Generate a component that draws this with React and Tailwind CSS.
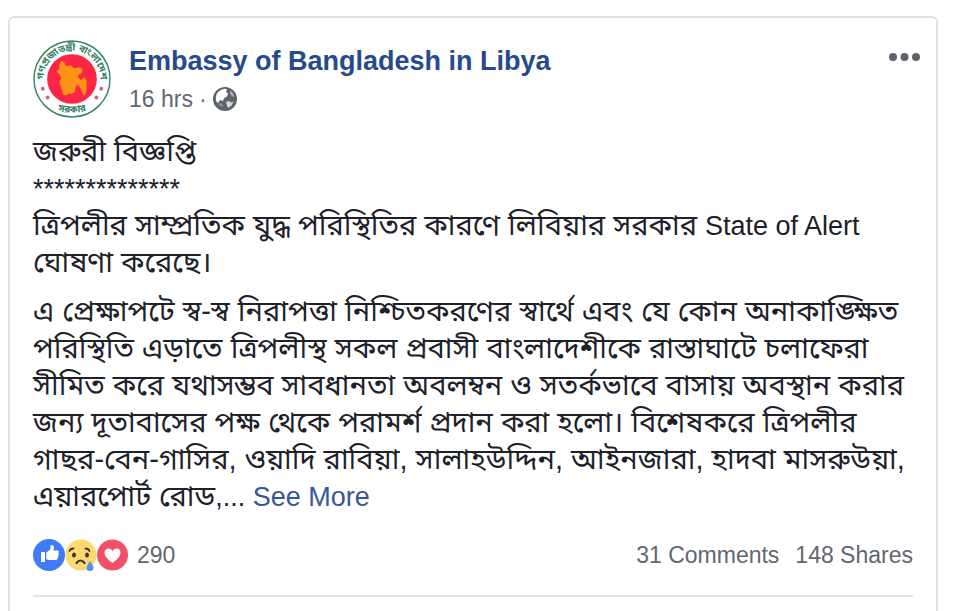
const NOTICE = [
    [
        'জরুরী বিজ্ঞপ্তি',
        <Latin>**************</Latin>,
        <>ত্রিপলীর সাম্প্রতিক যুদ্ধ পরিস্থিতির কারণে লিবিয়ার সরকার <Latin>State of Alert</Latin></>,
        'ঘোষণা করেছে।',
    ],
    [
        'এ প্রেক্ষাপটে স্ব-স্ব নিরাপত্তা নিশ্চিতকরণের স্বার্থে এবং যে কোন অনাকাঙ্ক্ষিত',
        'পরিস্থিতি এড়াতে ত্রিপলীস্থ সকল প্রবাসী বাংলাদেশীকে রাস্তাঘাটে চলাফেরা',
        'সীমিত করে যথাসম্ভব সাবধানতা অবলম্বন ও সতর্কভাবে বাসায় অবস্থান করার',
        'জন্য দূতাবাসের পক্ষ থেকে পরামর্শ প্রদান করা হলো। বিশেষকরে ত্রিপলীর',
        'গাছর-বেন-গাসির, ওয়াদি রাবিয়া, সালাহউদ্দিন, আইনজারা, হাদবা মাসরুউয়া,',
        <>এয়ারপোর্ট রোড<Latin>,... <a href="#more" className="text-[#365899]">See More</a></Latin></>,
    ],
];

export default function App() {
    return (
        <div className="flex h-screen flex-col overflow-hidden bg-white pt-4 pr-[22px] pl-2 font-['Liberation_Sans','Noto_Sans_Bengali',sans-serif]">
            <article className="flex-1 rounded-t-md border-2 border-b-0 border-[#dfe1e5] px-[23px] pt-[21px]">
                <header className="flex items-start gap-[18px]">
                    <a href="#page" aria-label="Embassy of Bangladesh in Libya" className="pt-px">
                        <Seal />
                    </a>
                    <div className="flex-1 pt-1">
                        <h1 className="text-[27px] leading-9 font-bold text-[#264a8c]">
                            <a href="#page">Embassy of Bangladesh in Libya</a>
                        </h1>
                        <p className="flex items-center gap-1.5 text-[23px] leading-10 text-[#616770]">
                            <a href="#post">16 hrs</a>
                            <span>·</span>
                            <Globe />
                        </p>
                    </div>
                    <button type="button" aria-label="More options" className="-mr-3 pt-3">
                        <Dots />
                    </button>
                </header>

                <div className="mt-[14px] flex flex-col gap-3 text-[29px] leading-[37px] text-[#1d2129]">
                    {NOTICE.map((lines, i) => (
                        <div key={i} className="whitespace-nowrap">
                            {lines.map((line, j) => (
                                <p key={j} className="h-[37px]">{line}</p>
                            ))}
                        </div>
                    ))}
                </div>

                <footer className="mt-[22px] flex items-center justify-between border-b-2 border-[#e5e5e5] pb-[22px] text-[23px] leading-9 text-[#616770]">
                    <button type="button" className="flex items-center">
                        <Like />
                        <Sad />
                        <Love />
                        <span className="ml-2">290</span>
                    </button>
                    <div className="flex gap-4">
                        <a href="#comments">31 Comments</a>
                        <a href="#shares">148 Shares</a>
                    </div>
                </footer>
            </article>
        </div>
    );
}

// Latin letters run larger than the Bengali ones at the same size
function Latin({ children }) {
    return <span className="text-[27px]">{children}</span>;
}

function Seal() {
    return (
        <svg viewBox="0 0 80 80" className="size-[78px]">
            <defs>
                <path id="arc-top" d="M12.500 49A29 29 0 1 1 67.500 49" />
                <path id="arc-bottom" d="M16 69 Q40 80 64 69" />
            </defs>
            <circle cx="40" cy="40" r="39" fill="#fff" stroke="#3c8468" strokeWidth="1.500" />
            <circle cx="40" cy="40" r="25.500" fill="#fb2545" />
            <path d="M27 25l2-4 3 2 2 4 5-1 3 3 6-1 3 2-1 4-3 1-1 3 3 3 4-3 2 4 0 8-1 5-2 2-3-7-3-4-2 1-1 6-3 2-4 0-2 2-3-1-2-7-2-6 2-4-2-4-3-3 3-2z" fill="#fb9415" />
            <text fontSize="10" fontWeight="bold" fill="#347f62" textAnchor="middle">
                <textPath href="#arc-top" startOffset="50%">গণপ্রজাতন্ত্রী বাংলাদেশ</textPath>
            </text>
            <text fontSize="10" fontWeight="bold" fill="#347f62" textAnchor="middle">
                <textPath href="#arc-bottom" startOffset="50%">সরকার</textPath>
            </text>
            <g fill="#d4607a">
                <circle cx="10" cy="50" r="2" />
                <circle cx="15" cy="59" r="2" />
                <circle cx="70" cy="50" r="2" />
                <circle cx="65" cy="59" r="2" />
            </g>
        </svg>
    );
}

function Globe() {
    return (
        <svg viewBox="0 0 24 24" className="size-6">
            <circle cx="12" cy="12" r="12" fill="#5e646d" />
            <path d="M3 14Q1.500 6 8 3q4-2 6-.5l-1 2.500 2 1.500-1 3-3 1.500-1 3-3-1-2 3z" fill="#fff" />
            <path d="M17 3.500q3.500 2 4.500 6l-2.500 0-2-3z" fill="#aeb2b8" />
            <path d="M13 15l3-1 2 1.500 2.500-1-2 4-3.500 2.500-1-2.500z" fill="#d5d7da" />
            <path d="M5 17l3-1 2 2-1 2z" fill="#8d929a" />
        </svg>
    );
}

function Dots() {
    return (
        <svg viewBox="0 0 40 12" className="h-3 w-10" fill="#5d626c">
            <circle cx="8" cy="6" r="4" />
            <circle cx="19.500" cy="6" r="4" />
            <circle cx="31" cy="6" r="4" />
        </svg>
    );
}

function Like() {
    return (
        <svg viewBox="0 0 32 32" className="size-8">
            <circle cx="16" cy="16" r="16" fill="#3f7bf6" />
            <path d="M8 13h4v10H8z" fill="#fff" />
            <path d="M13.300 13.500l4-3 .5-4.500q3-.5 3.200 2.500l-.5 3h4.500q1.500 1 .5 2.500 1 1.500-.3 2.500 .5 1.500-.7 2.500 0 2-1.500 2h-6.500l-3.200-.700z" fill="#fff" />
        </svg>
    );
}

function Sad() {
    return (
        <svg viewBox="0 0 32 32" className="size-8">
            <circle cx="16" cy="16" r="15.500" fill="#fbd971" />
            <g fill="none" stroke="#433322" strokeWidth="1.800" strokeLinecap="round">
                <path d="M4.500 12q1-2.500 4-2.500M20.500 9.500q3 0 4 2.500" />
                <path d="M11.500 24q4-5 8 0" strokeWidth="2.200" />
            </g>
            <ellipse cx="9" cy="16" rx="2" ry="2.600" fill="#433322" />
            <ellipse cx="22" cy="16" rx="2" ry="2.600" fill="#433322" />
            <path d="M25 22q3.500 5 3.500 6.500a3.500 3.500 0 0 1-7 0q0-1.500 3.500-6.500z" fill="#4f92ee" />
        </svg>
    );
}

function Love() {
    return (
        <svg viewBox="0 0 32 32" className="size-8">
            <circle cx="15.500" cy="16" r="15.500" fill="#f0506a" />
            <path d="M15.500 24Q7 18 7.500 13.500 8 9.500 11.500 9.500q3 0 4 2.700 1-2.700 4-2.700 3.500 0 4 4Q24 18 15.500 24z" fill="#fff" />
        </svg>
    );
}
